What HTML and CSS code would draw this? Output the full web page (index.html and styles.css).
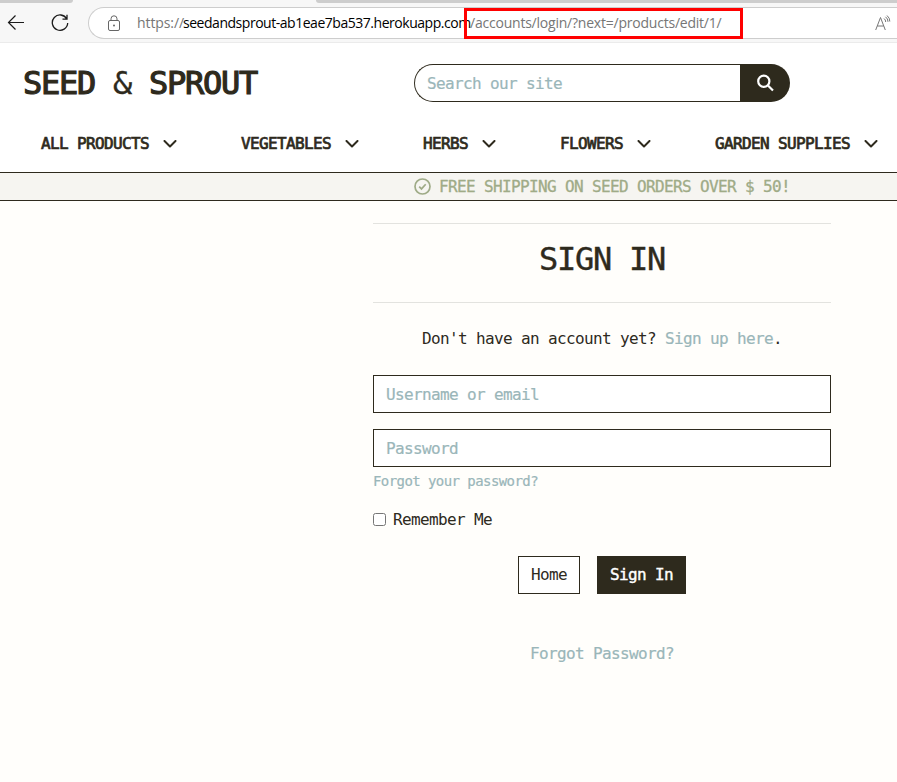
FILE: index.html
```html
<!DOCTYPE html>
<html lang="en">
<head>
<meta charset="utf-8">
<title>Seed &amp; Sprout</title>
<link rel="stylesheet" href="styles.css">
</head>
<body>
<div class="browser">
  <div class="tabs"><span class="tab-left"></span><span class="tab-right"></span></div>
  <div class="toolbar">
    <svg class="back" width="18" height="16" viewBox="0 0 18 16"><path d="M17 7.500H1.500M8.500 .5l-7 7 7 7"/></svg>
    <svg class="reload" width="18" height="18" viewBox="0 0 18 18"><path d="M15.800 5A7.700 7.700 0 1 0 16.700 9M16 .8V5.200h-4.500"/></svg>
    <div class="address">
      <svg class="lock" width="14" height="17" viewBox="0 0 14 17"><rect x="1.500" y="5.500" width="11" height="10" rx="1.500"/><path d="M4 5.500V3.800a3 3 0 0 1 6 0v1.700"/><circle class="dot" cx="7" cy="10.500" r="1"/></svg>
      <div class="url"><span class="scheme">https://</span><span class="host">seedandsprout-ab1eae7ba537.herokuapp.com</span><span class="path">/accounts/login/?next=/products/edit/1/</span><span class="marker"></span></div>
      <svg class="read" width="16" height="16" viewBox="0 0 16 16"><path d="M.7 15L5.500 2.500 10.300 15M2.300 11h6.400M9 3.500q1.800 1.300 1.700 3.500M10.500 1.800q2.600 2 2.500 5M12 .5q3 2.500 2.800 6"/></svg>
    </div>
  </div>
</div>
<header>
  <div class="top">
    <a class="brand">SEED <span class="amp">&amp;</span> SPROUT</a>
    <form class="search">
      <input type="text" placeholder="Search our site">
      <button type="button" aria-label="Search"><svg width="18" height="18" viewBox="0 0 18 18"><circle cx="7.800" cy="7.300" r="5.600"/><path d="M12 11.500l5 5"/></svg></button>
    </form>
  </div>
  <nav>
    <a>ALL PRODUCTS<svg width="14" height="8" viewBox="0 0 14 8"><path d="M1.500 1L7 6.500 12.500 1"/></svg></a>
    <a>VEGETABLES<svg width="14" height="8" viewBox="0 0 14 8"><path d="M1.500 1L7 6.500 12.500 1"/></svg></a>
    <a>HERBS<svg width="14" height="8" viewBox="0 0 14 8"><path d="M1.500 1L7 6.500 12.500 1"/></svg></a>
    <a>FLOWERS<svg width="14" height="8" viewBox="0 0 14 8"><path d="M1.500 1L7 6.500 12.500 1"/></svg></a>
    <a>GARDEN SUPPLIES<svg width="14" height="8" viewBox="0 0 14 8"><path d="M1.500 1L7 6.500 12.500 1"/></svg></a>
  </nav>
</header>
<div class="banner"><svg width="17" height="17" viewBox="0 0 17 17"><circle cx="8.500" cy="8.500" r="7.500"/><path d="M5.200 8.600l2.300 2.300 4.200-4.700"/></svg>FREE SHIPPING ON SEED ORDERS OVER $ 50!</div>
<main>
  <hr>
  <h1>SIGN IN</h1>
  <hr>
  <p class="signup">Don't have an account yet? <a>Sign up here</a>.</p>
  <form>
    <input class="field" type="text" placeholder="Username or email">
    <input class="field" type="password" placeholder="Password">
    <a class="small">Forgot your password?</a>
    <label class="remember"><input type="checkbox">Remember Me</label>
    <div class="actions"><button type="button" class="home">Home</button><button type="button" class="submit">Sign In</button></div>
  </form>
  <a class="forgot">Forgot Password?</a>
</main>
</body>
</html>
```
FILE: styles.css
```css
* { box-sizing: border-box; }
body {
  margin: 0;
  height: 782px;
  overflow: hidden;
  background: #fffefb;
  color: #2e2a1d;
  font: 16px/24px "DejaVu Sans Mono", monospace;
  letter-spacing: -0.0395em;
}
svg { flex: none; fill: none; stroke: currentColor; }
input, button { font: inherit; letter-spacing: inherit; color: inherit; }

.browser { height: 43px; background: #f7f7f7; border-bottom: 1px solid #ebebeb; }
.tabs { height: 3px; display: flex; justify-content: space-between; }
.tab-left { width: 73px; background: #cdcdcd; border-bottom-right-radius: 5px; }
.tab-right { width: 581px; background: #cdcdcd; border-bottom-left-radius: 5px; }
.toolbar { display: flex; align-items: center; height: 40px; padding-left: 7px; color: #1b1b1b; }
.back { stroke-width: 1.2; margin-right: 26px; }
.reload { stroke-width: 1.3; margin-right: 19px; }
.address {
  flex: 1;
  display: flex;
  align-items: center;
  height: 32px;
  padding: 0 6px 0 18px;
  background: #fff;
  border: 1px solid #cdcdcd;
  border-right: 0;
  border-radius: 16px 0 0 16px;
}
.lock { color: #666; margin-right: 16px; }
.lock .dot { fill: #666; stroke: none; }
.url {
  position: relative;
  display: flex;
  flex: 1;
  font: 14px/20px "Open Sans", "Noto Sans", sans-serif;
  letter-spacing: -0.1px;
  white-space: nowrap;
  color: #767676;
}
.scheme { width: 46px; }
.host { width: 287px; color: #000; letter-spacing: -0.47px; }
.path { letter-spacing: -0.22px; }
.marker { position: absolute; left: 327px; top: -5px; width: 279px; height: 31px; border: 3px solid #f00; }
.read { color: #767676; }

header { height: 130px; background: #fff; border-bottom: 1px solid #2e2a1d; }
.top { display: flex; align-items: center; padding: 21px 0 0 23px; }
.brand {
  width: 391px;
  font-size: 32px;
  line-height: 38px;
  letter-spacing: -0.0395em;
  -webkit-text-stroke: 1.2px;
}
.amp { -webkit-text-stroke: 0.3px; }
.search { display: flex; width: 376px; height: 38px; }
.search input {
  width: 326px;
  padding: 2px 12px 0;
  background: #fff;
  border: 1px solid #2e2a1d;
  border-right: 0;
  border-radius: 19px 0 0 19px;
}
.search button {
  width: 50px;
  padding: 0;
  border: 0;
  border-radius: 0 19px 19px 0;
  background: #2e2a1d;
  color: #fff;
  display: flex;
  align-items: center;
  justify-content: center;
}
.search svg { stroke-width: 2.2; }
::placeholder { color: #9ab6b9; opacity: 1; -webkit-text-stroke: 0.2px; }
nav {
  display: flex;
  justify-content: space-between;
  padding: 30px 19px 0 41px;
  white-space: nowrap;
}
nav a { display: flex; align-items: center; gap: 14px; -webkit-text-stroke: 0.7px; }
nav svg { stroke-width: 2; stroke-linecap: round; stroke-linejoin: round; }

.banner {
  height: 28px;
  padding-left: 414px;
  display: flex;
  align-items: center;
  gap: 8px;
  background: #f6f5f1;
  border-bottom: 1px solid #2e2a1d;
  color: #9fab87;
  -webkit-text-stroke: 0.3px;
}
.banner svg { stroke-width: 1.7; }

main { width: 458px; margin: 22px 0 0 373px; display: flex; flex-direction: column; }
hr { width: 100%; margin: 0; border: 0; border-top: 1px solid #e3e3df; }
h1 {
  margin: 16px 0 24px;
  font-size: 32px;
  line-height: 38px;
  font-weight: 400;
  letter-spacing: -0.0395em;
  text-align: center;
  -webkit-text-stroke: 0.4px;
}
.signup { margin: 24px 0; text-align: center; }
a { color: inherit; }
main a { color: #9ab6b9; -webkit-text-stroke: 0.2px; }
form { margin: 0; }
main form { display: flex; flex-direction: column; }
.field {
  height: 38px;
  margin: 0 0 16px;
  padding: 0 12px;
  background: #fff;
  border: 1px solid #2e2a1d;
  border-radius: 0;
}
.field + .field { margin-bottom: 4px; }
.small { font-size: 14px; line-height: 21px; letter-spacing: -0.57px; }
.remember { display: flex; align-items: center; margin-top: 16px; }
.remember input { width: 13px; height: 13px; margin: 0 7px 2px 0; }
.actions { display: flex; justify-content: center; gap: 17px; margin-top: 24px; }
.actions button { height: 38px; padding: 0 12px; border: 1px solid #2e2a1d; }
.home { width: 62px; background: #fff; }
.submit { width: 89px; background: #2e2a1d; color: #fff; -webkit-text-stroke: 0.4px; }
.forgot { margin-top: 48px; text-align: center; }
```
